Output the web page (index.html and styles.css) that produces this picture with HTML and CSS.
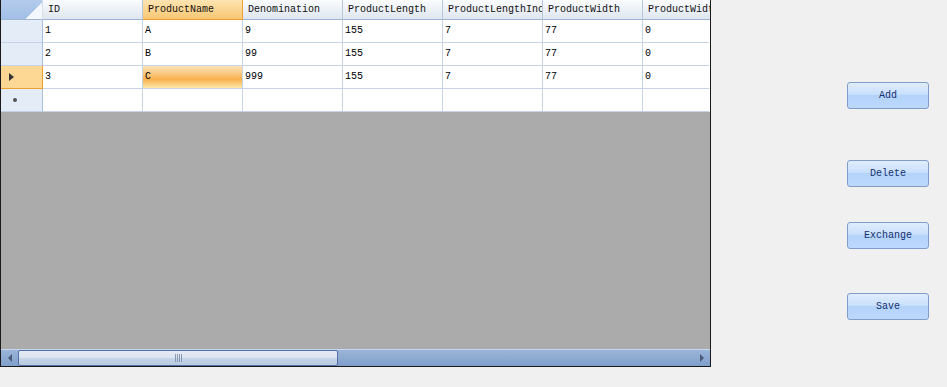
FILE: index.html
```html
<!DOCTYPE html>
<html lang="en">
<head>
    <meta charset="UTF-8">
    <title>Products</title>
    <link rel="stylesheet" href="styles.css">
</head>
<body>
    <div class="page">
        <div class="grid">
            <div class="row header-row">
                <div class="corner"></div>
                <div class="hcell">ID</div>
                <div class="hcell active">ProductName</div>
                <div class="hcell">Denomination</div>
                <div class="hcell">ProductLength</div>
                <div class="hcell">ProductLengthInch</div>
                <div class="hcell">ProductWidth</div>
                <div class="hcell last">ProductWidthInch</div>
            </div>
            <div class="row">
                <div class="rhead"></div>
                <div class="cell">1</div><div class="cell">A</div><div class="cell">9</div><div class="cell">155</div><div class="cell">7</div><div class="cell">77</div><div class="cell last">0</div>
            </div>
            <div class="row">
                <div class="rhead"></div>
                <div class="cell">2</div><div class="cell">B</div><div class="cell">99</div><div class="cell">155</div><div class="cell">7</div><div class="cell">77</div><div class="cell last">0</div>
            </div>
            <div class="row">
                <div class="rhead current"><span class="arrow"></span></div>
                <div class="cell">3</div><div class="cell selected">C</div><div class="cell">999</div><div class="cell">155</div><div class="cell">7</div><div class="cell">77</div><div class="cell last">0</div>
            </div>
            <div class="row">
                <div class="rhead newrow"><span class="star"></span></div>
                <div class="cell"></div><div class="cell"></div><div class="cell"></div><div class="cell"></div><div class="cell"></div><div class="cell"></div><div class="cell last"></div>
            </div>
            <div class="empty"></div>
            <div class="hscroll">
                <div class="sbtn left"><span></span></div>
                <div class="thumb"><span class="grip"></span></div>
                <div class="track"></div>
                <div class="sbtn right"><span></span></div>
            </div>
        </div>
        <div class="actions">
            <button class="btn add">Add</button>
            <button class="btn delete">Delete</button>
            <button class="btn exchange">Exchange</button>
            <button class="btn save">Save</button>
        </div>
    </div>
</body>
</html>
```

FILE: styles.css
```css
body {
    margin: 0;
    background-color: #f0f0f0;
    font-family: "Liberation Mono", "DejaVu Sans Mono", monospace;
    font-size: 10px;
    color: black;
}
.page {
    display: flex;
    align-items: flex-start;
}
.grid {
    width: 709px;
    height: 366px;
    border-left: 1px solid #1a1a1a;
    border-right: 1px solid #1a1a1a;
    border-bottom: 1px solid #1a1a1a;
    background-color: #ababab;
    display: flex;
    flex-direction: column;
    overflow: hidden;
}
.row {
    display: flex;
    height: 23px;
    flex: none;
    background-color: white;
}
.header-row {
    height: 20px;
}
.corner {
    width: 41px;
    height: 19px;
    border-right: 1px solid #d5dfee;
    border-bottom: 1px solid #9fb4d2;
    background: linear-gradient(135deg, transparent 72%, #f4f7fb 72%),
                linear-gradient(#b3cbec, #a3bfe6);
    flex: none;
}
.hcell {
    width: 94px;
    height: 19px;
    line-height: 19px;
    padding-left: 5px;
    border-right: 1px solid #b7c7de;
    border-bottom: 1px solid #9fb4d2;
    background: linear-gradient(#fafcfe, #dfe6f0);
    white-space: nowrap;
    overflow: hidden;
    flex: none;
    color: #111;
}
.hcell.active {
    background: linear-gradient(#fde4b2, #f8c771);
    border-bottom-color: #f0a030;
    border-right-color: #f0a030;
}
.hcell.last {
    width: 66px;
    border-right: none;
}
.rhead {
    width: 41px;
    height: 22px;
    border-right: 1px solid #a9bfdd;
    border-bottom: 1px solid #c3d2e6;
    background-color: #e4ecf7;
    display: flex;
    align-items: center;
    flex: none;
}
.rhead.current {
    background-color: #fdd895;
    border-right-color: #f0a030;
    border-bottom-color: #f0a030;
}
.arrow {
    margin-left: 8px;
    width: 0;
    height: 0;
    border-top: 4px solid transparent;
    border-bottom: 4px solid transparent;
    border-left: 5px solid #333;
}
.star {
    margin-left: 12px;
    width: 4px;
    height: 4px;
    border-radius: 50%;
    background-color: #555;
}
.cell {
    width: 97px;
    height: 22px;
    line-height: 22px;
    padding-left: 2px;
    border-right: 1px solid #c6d4e6;
    border-bottom: 1px solid #c6d4e6;
    white-space: nowrap;
    overflow: hidden;
    flex: none;
}
.cell.last {
    width: 64px;
    border-right: none;
}
.cell.selected {
    background: linear-gradient(#fde3b6, #fbc070 45%, #f8b04c 60%, #fde8a8);
}
.empty {
    flex: 1;
}
.hscroll {
    height: 16px;
    display: flex;
    align-items: stretch;
    border-top: 1px solid #c4d6ee;
    background: linear-gradient(#9bb5d8, #7f9fcb);
}
.sbtn {
    width: 17px;
    display: flex;
    align-items: center;
    justify-content: center;
    flex: none;
}
.sbtn.left span {
    border-top: 4px solid transparent;
    border-bottom: 4px solid transparent;
    border-right: 4px solid #4c5a78;
}
.sbtn.right span {
    border-top: 4px solid transparent;
    border-bottom: 4px solid transparent;
    border-left: 4px solid #4c5a78;
}
.thumb {
    width: 318px;
    border: 1px solid #5470a8;
    border-radius: 2px;
    background: linear-gradient(#e3eaf3 0%, #dde5f0 45%, #c4d3e6 55%, #b9cae1 100%);
    display: flex;
    align-items: center;
    justify-content: center;
    flex: none;
}
.grip {
    width: 7px;
    height: 8px;
    background: repeating-linear-gradient(90deg, #8a9ab4 0 1px, transparent 1px 2px);
}
.track {
    flex: 1;
}
.actions {
    display: flex;
    flex-direction: column;
    margin-left: 136px;
}
.btn {
    width: 82px;
    height: 27px;
    border: 1px solid #7f9dc8;
    border-radius: 3px;
    background: linear-gradient(#e0edfd 0%, #c9e0fb 45%, #b4d3fa 50%, #bcd9fd 100%);
    color: #142f70;
    font-family: "Liberation Mono", "DejaVu Sans Mono", monospace;
    font-size: 10px;
    padding: 0;
    cursor: pointer;
}
.add {
    margin-top: 82px;
}
.delete {
    margin-top: 51px;
}
.exchange {
    margin-top: 35px;
}
.save {
    margin-top: 44px;
}
```
